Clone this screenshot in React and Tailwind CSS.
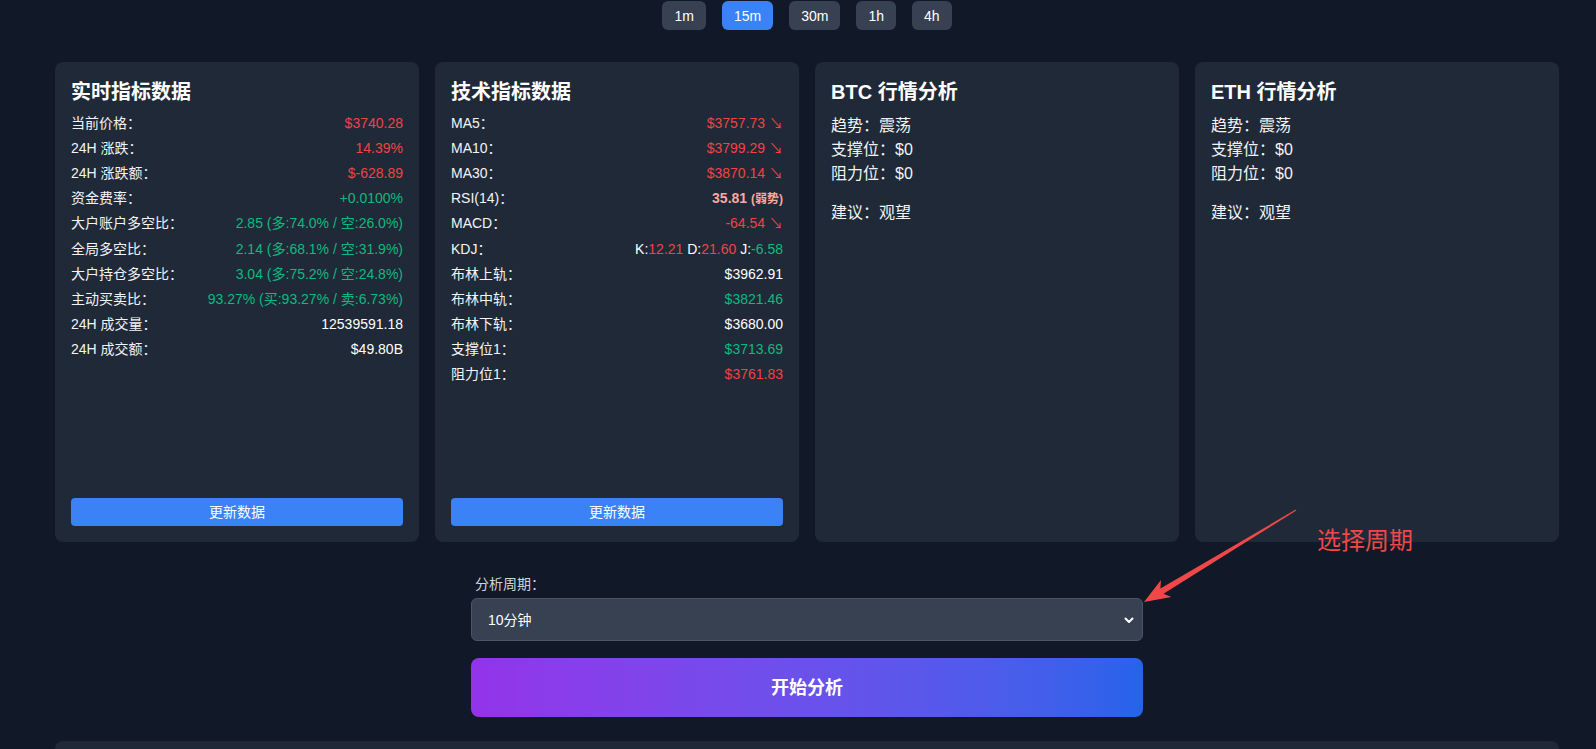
import React from "react";

const FONT = { fontFamily: '"Liberation Sans", Arial, "Noto Sans CJK SC", sans-serif' };

function Row({ label, children, cls = "text-white" }) {
  return (
    <div className="flex h-[25.2px] items-center justify-between text-sm">
      <span className="text-gray-100">{label}</span>
      <span className={cls}>{children}</span>
    </div>
  );
}

function Card({ title, children, button }) {
  return (
    <div className="flex h-[480px] flex-col rounded-lg bg-[#1f2937] p-4">
      <h2 className="mb-1 text-xl font-bold leading-7 text-white">{title}</h2>
      {children}
      {button && (
        <button className="mt-auto h-[28px] w-full rounded bg-[#3b82f6] text-sm text-white">
          更新数据
        </button>
      )}
    </div>
  );
}

function Market({ title }) {
  return (
    <div className="flex h-[480px] flex-col rounded-lg bg-[#1f2937] p-4">
      <h2 className="mb-2 text-xl font-bold leading-7 text-white">{title}</h2>
      <div className="text-base leading-6 text-gray-100">
        <p>趋势：震荡</p>
        <p>支撑位：$0</p>
        <p>阻力位：$0</p>
        <p className="mt-[15px]">建议：观望</p>
      </div>
    </div>
  );
}

export default function App() {
  const red = "text-[#ef4444]";
  const green = "text-[#10b981]";
  return (
    <div className="relative h-[749px] overflow-hidden bg-[#111827] pl-[55px] pr-[37px]" style={FONT}>
      <div className="flex justify-center gap-4 pt-px">
        {["1m", "15m", "30m", "1h", "4h"].map((t) => (
          <button
            key={t}
            className={
              t === "15m"
                ? "flex h-[29px] items-center rounded-md bg-[#3b82f6] px-3 text-sm text-white"
                : "flex h-[29px] items-center rounded-md bg-[#374151] px-3 text-sm text-white"
            }
          >
            {t}
          </button>
        ))}
      </div>

      <div className="mt-[32px] grid grid-cols-4 gap-4">
        <Card title="实时指标数据" button>
          <Row label="当前价格：" cls={red}>$3740.28</Row>
          <Row label="24H 涨跌：" cls={red}>14.39%</Row>
          <Row label="24H 涨跌额：" cls={red}>$-628.89</Row>
          <Row label="资金费率：" cls={green}>+0.0100%</Row>
          <Row label="大户账户多空比：" cls={green}>2.85 (多:74.0% / 空:26.0%)</Row>
          <Row label="全局多空比：" cls={green}>2.14 (多:68.1% / 空:31.9%)</Row>
          <Row label="大户持仓多空比：" cls={green}>3.04 (多:75.2% / 空:24.8%)</Row>
          <Row label="主动买卖比：" cls={green}>93.27% (买:93.27% / 卖:6.73%)</Row>
          <Row label="24H 成交量：">12539591.18</Row>
          <Row label="24H 成交额：">$49.80B</Row>
        </Card>

        <Card title="技术指标数据" button>
          <Row label="MA5：" cls={red}>$3757.73 ↘</Row>
          <Row label="MA10：" cls={red}>$3799.29 ↘</Row>
          <Row label="MA30：" cls={red}>$3870.14 ↘</Row>
          <Row label="RSI(14)：" cls="font-bold text-[#fca5a5]">
            35.81 <span className="text-xs">(弱势)</span>
          </Row>
          <Row label="MACD：" cls={red}>-64.54 ↘</Row>
          <Row label="KDJ：">
            K:<span className={red}>12.21</span> D:<span className={red}>21.60</span> J:
            <span className={green}>-6.58</span>
          </Row>
          <Row label="布林上轨：">$3962.91</Row>
          <Row label="布林中轨：" cls={green}>$3821.46</Row>
          <Row label="布林下轨：">$3680.00</Row>
          <Row label="支撑位1：" cls={green}>$3713.69</Row>
          <Row label="阻力位1：" cls={red}>$3761.83</Row>
        </Card>

        <Market title="BTC 行情分析" />
        <Market title="ETH 行情分析" />
      </div>

      <div className="mx-auto mt-8 max-w-2xl">
        <label className="mb-1 block pl-1 text-sm leading-5 text-gray-300">分析周期：</label>
        <div className="relative">
          <select className="h-[43px] w-full appearance-none rounded-md border border-[#4b5563] bg-[#374151] px-4 text-sm text-white outline-none">
            <option>10分钟</option>
          </select>
          <svg
            className="pointer-events-none absolute right-[8px] top-[16px]"
            width="12"
            height="12"
            viewBox="0 0 12 12"
          >
            <path d="M2.5 4.5 L6 8 L9.5 4.5" fill="none" stroke="white" strokeWidth="2" strokeLinecap="round" strokeLinejoin="round" />
          </svg>
        </div>
        <button className="mt-[17px] h-[59px] w-full rounded-lg bg-gradient-to-r from-[#9333ea] to-[#2563eb] text-lg font-bold text-white">
          开始分析
        </button>
      </div>

      <div className="mt-6 h-[200px] rounded-t-lg bg-[#1f2937]" />

      <svg
        className="pointer-events-none absolute left-0 top-0"
        width="1596"
        height="749"
        viewBox="0 0 1596 749"
      >
        <polygon
          points="1144,602 1161,580 1160.4,588.6 1295.7,509.6 1296.3,510.4 1163.5,593.7 1171.4,597"
          fill="#f04848"
        />
      </svg>
      <div
        className="pointer-events-none absolute left-[1317px] top-[523px] text-2xl leading-8 text-[#f04848]"
        style={{ fontFamily: '"Noto Sans CJK SC", sans-serif' }}
      >
        选择周期
      </div>
    </div>
  );
}
